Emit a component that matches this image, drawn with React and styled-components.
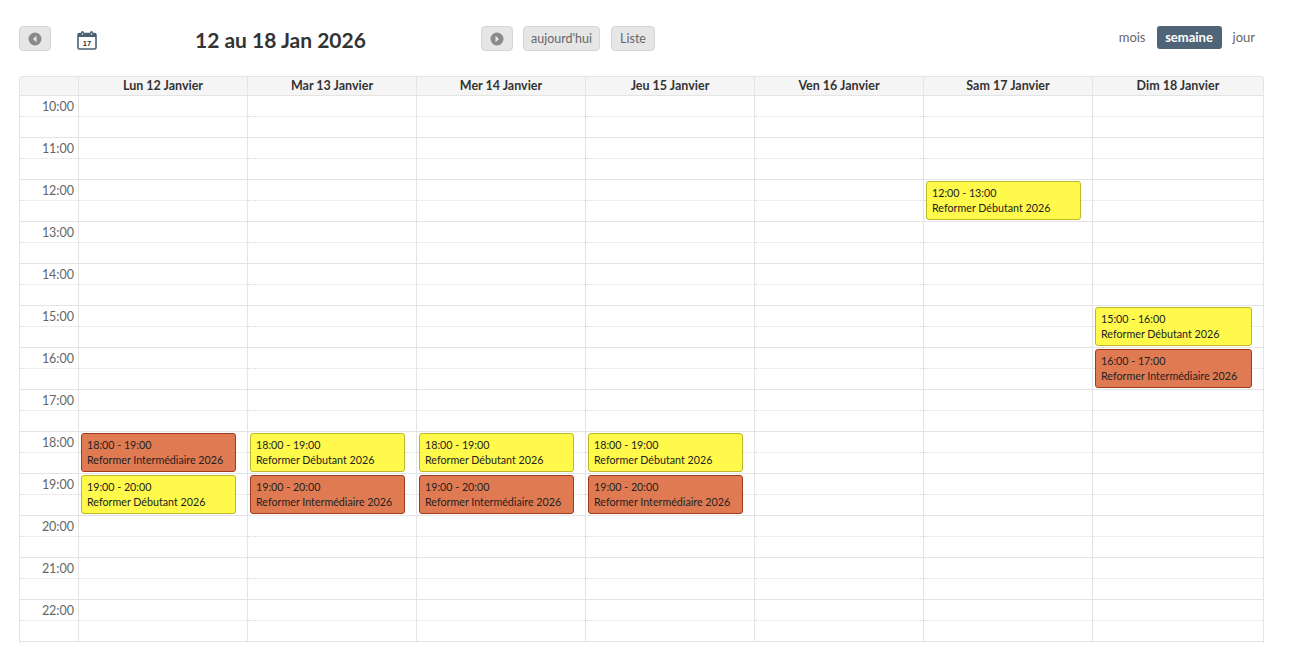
import React from 'react'
import styled, { createGlobalStyle } from 'styled-components'

const GlobalStyle = createGlobalStyle`
  html, body { margin: 0; padding: 0; background: #fff; }
  body { font-family: "Lato", "Open Sans", "Liberation Sans", sans-serif; color: #333; }
  * { box-sizing: border-box; }
`

const Page = styled.div`
  width: 1292px;
  height: 660px;
  padding: 26px 28px 0 19px;
  overflow: hidden;
`

const Toolbar = styled.div`
  display: flex;
  align-items: flex-start;
  height: 50px;
`

const NavButton = styled.button`
  width: 32px;
  height: 25px;
  margin: 0 0 0 ${p => p.$gap || 0}px;
  padding: 0;
  display: flex;
  align-items: center;
  justify-content: center;
  background: #e6e6e6;
  border: 1px solid #d6d6d6;
  border-radius: 4px;
`

const TextButton = styled.button`
  height: 25px;
  margin-left: ${p => p.$gap}px;
  padding: 0 ${p => p.$pad}px;
  background: #e6e6e6;
  border: 1px solid #d6d6d6;
  border-radius: 4px;
  font: 12.5px "Lato", sans-serif;
  color: #666;
`

const CalendarIcon = styled.svg`
  display: block;
  margin: 4px 0 0 26px;
`

const Title = styled.h1`
  width: 286px;
  margin: 0;
  padding-left: 98px;
  font-size: 21px;
  line-height: 28px;
  font-weight: 700;
  color: #333;
  white-space: nowrap;
`

const Views = styled.div`
  display: flex;
  align-items: center;
  margin-left: auto;
  margin-right: 1px;
  height: 23px;
`

const ViewLink = styled.span`
  padding: 0 8px;
  height: 23px;
  width: ${p => (p.$active ? '65px' : 'auto')};
  text-align: center;
  line-height: 22px;
  font-size: 13px;
  font-weight: ${p => (p.$active ? 700 : 400)};
  color: ${p => (p.$active ? '#fff' : '#666')};
  background: ${p => (p.$active ? '#4f6477' : 'transparent')};
  border-radius: 3px;
  margin: 0 ${p => (p.$active ? 3 : 0)}px;
`

const Calendar = styled.div`
  width: 1245px;
`

const HeadRow = styled.div`
  display: grid;
  grid-template-columns: 58px repeat(6, 169px) 171px;
  height: 20px;
  background: #f5f5f5;
  border: 1px solid #e4e4e4;
  border-radius: 3px 3px 0 0;
`

const HeadCell = styled.div`
  border-left: ${p => (p.$first ? 'none' : '1px solid #e4e4e4')};
  text-align: center;
  font-size: 12.5px;
  line-height: 18px;
  font-weight: 700;
  color: #333;
  white-space: nowrap;
`

const Body = styled.div`
  display: grid;
  grid-template-columns: 58px repeat(6, 169px) 171px;
  border-left: 1px solid #e4e4e4;
  border-right: 1px solid #e4e4e4;
  padding-bottom: 1px;
`

const Column = styled.div`
  position: relative;
  border-left: ${p => (p.$first ? 'none' : '1px solid #e4e4e4')};
`

const Slot = styled.div`
  height: 42px;
  border-bottom: 1px solid #e4e4e4;
`

const HalfLine = styled.div`
  height: 21px;
  border-bottom: 1px dotted #dcdcdc;
`

const TimeLabel = styled(HalfLine)`
  padding: 3px 4px 0 0;
  text-align: right;
  font-size: 12.5px;
  line-height: 15px;
  color: #666;
`

const Event = styled.div`
  position: absolute;
  left: 2px;
  right: 11px;
  top: ${p => p.$hour * 42 + 1}px;
  height: 39px;
  padding: 3px 5px 0;
  background: ${p => (p.$level === 'inter' ? '#e07a52' : '#fff94c')};
  border: 1px solid ${p => (p.$level === 'inter' ? '#a03a1c' : '#bdb72c')};
  border-radius: 3px;
  font-size: 10.7px;
  line-height: 15px;
  color: #222;
  white-space: nowrap;
`

const hours = ['10:00', '11:00', '12:00', '13:00', '14:00', '15:00', '16:00', '17:00', '18:00', '19:00', '20:00', '21:00', '22:00']

const names = {
  deb: 'Reformer Débutant 2026',
  inter: 'Reformer Intermédiaire 2026',
}

const days = [
  { label: 'Lun 12 Janvier', events: [[18, 'inter'], [19, 'deb']] },
  { label: 'Mar 13 Janvier', events: [[18, 'deb'], [19, 'inter']] },
  { label: 'Mer 14 Janvier', events: [[18, 'deb'], [19, 'inter']] },
  { label: 'Jeu 15 Janvier', events: [[18, 'deb'], [19, 'inter']] },
  { label: 'Ven 16 Janvier', events: [] },
  { label: 'Sam 17 Janvier', events: [[12, 'deb']] },
  { label: 'Dim 18 Janvier', events: [[15, 'deb'], [16, 'inter']] },
]

const ArrowIcon = ({ right }) => (
  <svg width="14" height="14" viewBox="0 0 14 14">
    <circle cx="7" cy="7" r="6.5" fill="#8a8a8a" />
    <path d={right ? 'M5.5 3.8 9 7l-3.5 3.2z' : 'M8.5 3.8 5 7l3.5 3.2z'} fill="#e6e6e6" />
  </svg>
)

const App = () => {
  return (
    <Page>
      <GlobalStyle />
      <Toolbar>
        <NavButton><ArrowIcon /></NavButton>
        <CalendarIcon width="20" height="20" viewBox="0 0 20 20">
          <rect x="1" y="3.5" width="18" height="15.5" rx="1.5" fill="#fff" stroke="#4a5f73" strokeWidth="1.6" />
          <rect x="1" y="3" width="18" height="4" fill="#4a5f73" />
          <circle cx="5.5" cy="2.5" r="1.5" fill="#4a5f73" />
          <circle cx="14.5" cy="2.5" r="1.5" fill="#4a5f73" />
          <circle cx="5.5" cy="4" r="0.8" fill="#fff" />
          <circle cx="14.5" cy="4" r="0.8" fill="#fff" />
          <text x="10" y="15.5" textAnchor="middle" fontSize="7.5" fontWeight="700" fill="#333" fontFamily="Liberation Sans">17</text>
        </CalendarIcon>
        <Title>12 au 18 Jan 2026</Title>
        <NavButton $gap={98}><ArrowIcon right /></NavButton>
        <TextButton $gap={10} $pad={7}>aujourd'hui</TextButton>
        <TextButton $gap={11} $pad={8}>Liste</TextButton>
        <Views>
          <ViewLink>mois</ViewLink>
          <ViewLink $active>semaine</ViewLink>
          <ViewLink>jour</ViewLink>
        </Views>
      </Toolbar>
      <Calendar>
        <HeadRow>
          <HeadCell $first />
          {days.map(d => <HeadCell key={d.label}>{d.label}</HeadCell>)}
        </HeadRow>
        <Body>
          <Column $first>
            {hours.map(h => (
              <Slot key={h}><TimeLabel>{h}</TimeLabel></Slot>
            ))}
          </Column>
          {days.map(d => (
            <Column key={d.label}>
              {hours.map(h => (
                <Slot key={h}><HalfLine /></Slot>
              ))}
              {d.events.map(([hour, level]) => (
                <Event key={hour} $hour={hour - 10} $level={level}>
                  {hour}:00 - {hour + 1}:00
                  <br />
                  {names[level]}
                </Event>
              ))}
            </Column>
          ))}
        </Body>
      </Calendar>
    </Page>
  )
}

export default App
